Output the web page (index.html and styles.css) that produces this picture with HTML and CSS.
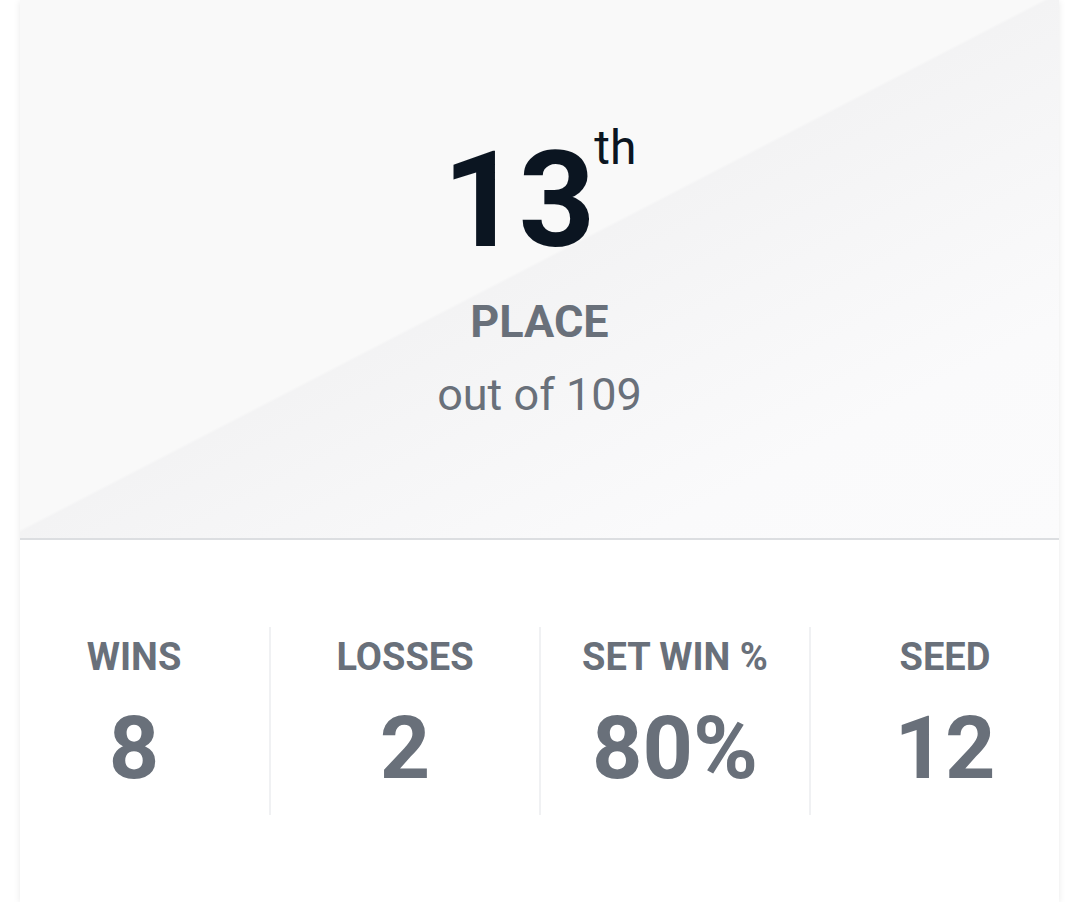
FILE: index.html
```html
<!DOCTYPE html>
<html lang="en">
<head>
<meta charset="utf-8">
<title>Standing</title>
<link rel="stylesheet" href="styles.css">
</head>
<body>
<div class="page">
  <section class="card">
    <div class="hero">
      <div class="rank"><span class="rank-num">13</span><sup class="rank-suffix">th</sup></div>
      <div class="place">PLACE</div>
      <div class="outof">out of 109</div>
    </div>
    <div class="stats">
      <div class="stat">
        <div class="stat-label">WINS</div>
        <div class="stat-value">8</div>
      </div>
      <div class="stat">
        <div class="stat-label">LOSSES</div>
        <div class="stat-value">2</div>
      </div>
      <div class="stat">
        <div class="stat-label">SET WIN %</div>
        <div class="stat-value">80%</div>
      </div>
      <div class="stat">
        <div class="stat-label">SEED</div>
        <div class="stat-value">12</div>
      </div>
    </div>
  </section>
</div>
</body>
</html>
```

FILE: styles.css
```css
* { box-sizing: border-box; }

html, body {
  margin: 0;
  padding: 0;
  background: #ffffff;
  font-family: Roboto, "Liberation Sans", Arial, sans-serif;
}

.page {
  padding: 0 21px 0 20px;
}

.card {
  background: #ffffff;
  box-shadow: 0 1px 7px rgba(0, 0, 0, 0.09);
  height: 902px;
}

.hero {
  height: 540px;
  border-bottom: 2px solid #dcdee1;
  background: linear-gradient(to bottom right, #f9f9f9 0%, #f9f9f9 49.2%, #f3f3f4 49.5%, #f6f6f7 62%, #fafafb 80%, #fbfbfc 100%);
  display: flex;
  flex-direction: column;
  align-items: center;
  padding-top: 134px;
}

.rank {
  display: flex;
  align-items: flex-start;
  line-height: 1;
  color: #0b1521;
  padding-left: 0;
}

.rank-num {
  font-size: 134px;
  font-weight: 700;
  line-height: 1;
  letter-spacing: -1px;
}

.rank-suffix {
  font-size: 48px;
  font-weight: 400;
  line-height: 1;
  vertical-align: baseline;
  margin-left: 0;
  margin-top: -10px;
}

.place {
  margin-top: 31px;
  font-size: 45px;
  font-weight: 700;
  line-height: 1;
  color: #69707a;
}

.outof {
  margin-top: 28px;
  font-size: 45px;
  font-weight: 400;
  line-height: 1;
  color: #69707a;
}

.stats {
  display: grid;
  grid-template-columns: repeat(4, 1fr);
  margin: 0 -20px 0 -21px;
  padding-top: 87px;
}

.stat {
  height: 188px;
  display: flex;
  flex-direction: column;
  align-items: center;
  padding-top: 11px;
}

.stat + .stat {
  border-left: 2px solid #f0f1f3;
}

.stat-label {
  font-size: 38px;
  font-weight: 700;
  line-height: 1;
  color: #69707a;
}

.stat-value {
  margin-top: 28px;
  font-size: 88px;
  font-weight: 700;
  line-height: 1;
  color: #69707a;
}
```
